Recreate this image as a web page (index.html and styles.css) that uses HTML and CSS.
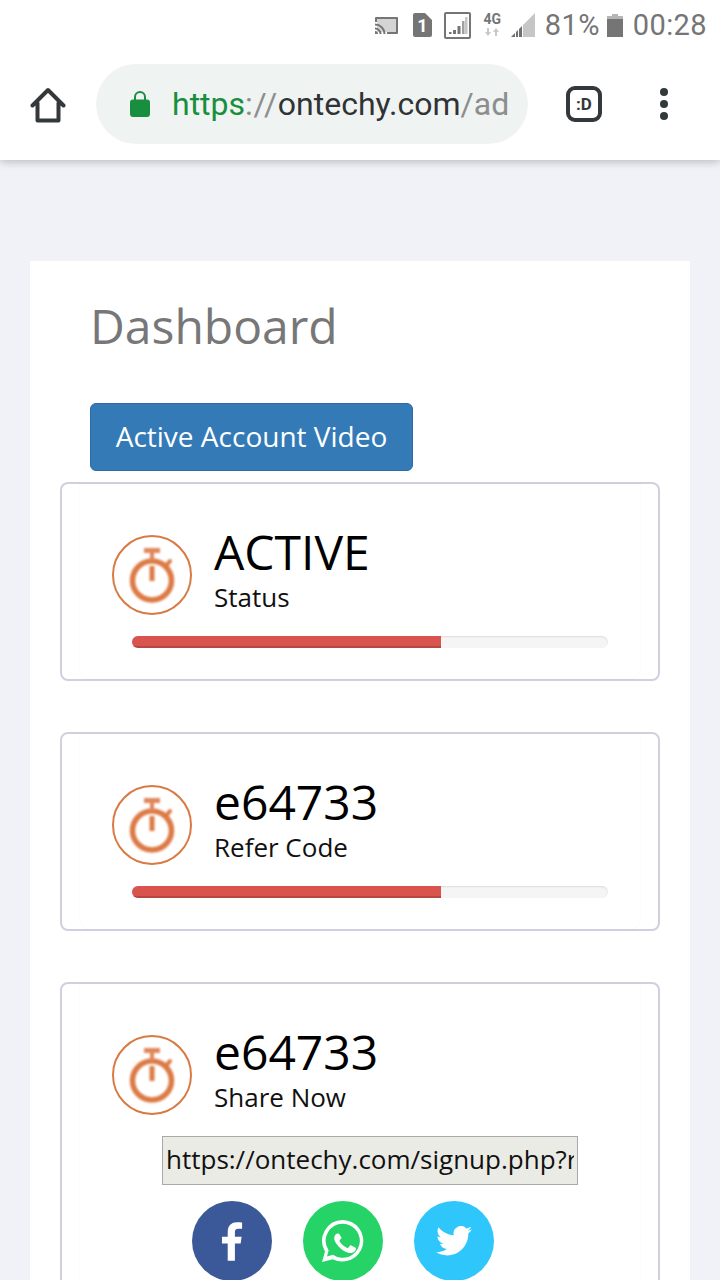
FILE: index.html
```html
<!DOCTYPE html>
<html lang="en">
<head>
    <meta charset="UTF-8">
    <meta name="viewport" content="width=device-width, initial-scale=1.0">
    <title>Dashboard</title>
    <link rel="stylesheet" href="styles.css">
</head>
<body>
<svg class="defs" width="0" height="0">
    <symbol id="watch" viewBox="0 0 80 80">
        <circle cx="40" cy="40" r="39" fill="none" stroke="#d97a42" stroke-width="2"/>
        <g class="watch-face">
            <circle cx="40" cy="45.500" r="19.500" fill="none" stroke="#dc7a45" stroke-width="5.500"/>
            <path d="M32 13h16v5H32z" fill="#e0875a"/>
            <path d="M40 18v8" stroke="#e0875a" stroke-width="4"/>
            <path d="M40 31v15" stroke="#dc7a45" stroke-width="5"/>
            <path d="M54 31l4-5" stroke="#dc7a45" stroke-width="4" stroke-linecap="round"/>
        </g>
    </symbol>
</svg>

<!-- Phone status bar -->
<div class="status-bar">
    <svg class="ico-cast" width="23" height="17" viewBox="0 0 23 17">
        <rect x="2" y="1.500" width="19.500" height="13.500" fill="#d4d4d4"/>
        <path d="M1 0h21a1 1 0 0 1 1 1v15a1 1 0 0 1-1 1H12v-2h9V2H2v3H0V1a1 1 0 0 1 1-1z" fill="#757575"/>
        <path d="M0 6.500A10.500 10.500 0 0 1 10.500 17H8.500A8.500 8.500 0 0 0 0 8.500zM0 10.500A6.500 6.500 0 0 1 6.500 17H4.500A4.500 4.500 0 0 0 0 12.500zM0 14a3 3 0 0 1 3 3H0z" fill="#757575"/>
    </svg>
    <svg class="ico-sim" width="19" height="24" viewBox="0 0 19 24">
        <path d="M2 0h10l7 7v15a2 2 0 0 1-2 2H2a2 2 0 0 1-2-2V2a2 2 0 0 1 2-2z" fill="#757575"/>
        <text x="9.500" y="19" text-anchor="middle" class="sim-num">1</text>
    </svg>
    <svg class="ico-box" width="27" height="27" viewBox="0 0 27 27">
        <rect x="1" y="1" width="25" height="25" rx="1" fill="none" stroke="#757575" stroke-width="2"/>
        <path d="M5 20h2.500v2H5zM9 18h3v4H9zM13.500 14h3v8h-3z" fill="#757575"/>
        <path d="M18 9h2.500v13H18z" fill="#a0a0a0"/>
        <path d="M21 5h2.500v17H21z" fill="#c4c4c4"/>
    </svg>
    <div class="net">
        <span class="net-label">4G</span>
        <svg width="14" height="8" viewBox="0 0 14 8">
            <path d="M3 8L0 4h2V0h2v4h2zM11 0l3 4h-2v4h-2V4H8z" fill="#c8c8c8"/>
        </svg>
    </div>
    <svg class="ico-signal" width="24" height="24" viewBox="0 0 24 24">
        <path d="M24 0v24H12V12z" fill="#c6c6c6"/>
        <path d="M0 24l4-4v4zM5 19l2-2v7H5zM8 16l3-3v11H8z" fill="#6e6e6e"/>
    </svg>
    <span class="battery-pct">81%</span>
    <svg class="ico-battery" width="16" height="23" viewBox="0 0 16 23">
        <path d="M5 0h6v2h5v21H0V2h5z" fill="#757575"/>
        <path d="M5 0h6v2h5v3H0V2h5z" fill="#b5b5b5"/>
    </svg>
    <span class="clock">00:28</span>
</div>

<!-- Browser toolbar -->
<div class="toolbar">
    <svg class="ico-home" width="36" height="36" viewBox="0 0 36 36">
        <path d="M2.500 18.500L18 3l15.500 15.500M7.500 16v17.500h21V16" fill="none" stroke="#33383b" stroke-width="4" stroke-linejoin="round" stroke-linecap="round"/>
    </svg>
    <div class="url-pill">
        <svg class="ico-lock" width="20" height="26" viewBox="0 0 20 26">
            <path d="M5 9V6a5 5 0 0 1 10 0v3" fill="none" stroke="#188e3e" stroke-width="2"/>
            <rect y="8.500" width="20" height="17.500" rx="3" fill="#188e3e"/>
        </svg>
        <div class="url"><span class="url-scheme">https</span><span class="url-sep">://</span>ontechy.com<span class="url-dim">/ad</span></div>
    </div>
    <div class="tab-btn">:D</div>
    <div class="menu-dots"><i></i><i></i><i></i></div>
</div>

<div class="page">
    <div class="panel">
        <h1 class="title">Dashboard</h1>
        <button class="btn-video">Active Account Video</button>

        <div class="card">
            <div class="card-inner">
                <div class="stat">
                    <svg class="watch" width="80" height="80"><use href="#watch"/></svg>
                    <div>
                        <div class="stat-value">ACTIVE</div>
                        <div class="stat-label">Status</div>
                    </div>
                </div>
                <div class="progress"><div class="progress-bar" style="width: 65%"></div></div>
            </div>
        </div>

        <div class="card">
            <div class="card-inner">
                <div class="stat">
                    <svg class="watch" width="80" height="80"><use href="#watch"/></svg>
                    <div>
                        <div class="stat-value">e64733</div>
                        <div class="stat-label">Refer Code</div>
                    </div>
                </div>
                <div class="progress"><div class="progress-bar" style="width: 65%"></div></div>
            </div>
        </div>

        <div class="card">
            <div class="card-inner">
                <div class="stat">
                    <svg class="watch" width="80" height="80"><use href="#watch"/></svg>
                    <div>
                        <div class="stat-value">e64733</div>
                        <div class="stat-label">Share Now</div>
                    </div>
                </div>
                <input class="share-link" type="text" value="https://ontechy.com/signup.php?ref=e64733" readonly>
                <div class="social">
                    <div class="social-btn fb">
                        <svg width="23" height="39" viewBox="0 0 24 40">
                            <path d="M7 40V22H1v-7h6V10C7 3.500 11 0 16.500 0c2.500 0 4.800.2 5.500.3v6.500h-3.800c-3 0-3.700 1.500-3.700 3.600V15h7l-1 7h-6v18z" fill="#fff"/>
                        </svg>
                    </div>
                    <div class="social-btn wa">
                        <svg width="48" height="48" viewBox="0 0 24 24">
                            <path d="M12 1.500A10.400 10.400 0 0 0 3 17.200L1.500 22.500l5.400-1.400A10.400 10.400 0 1 0 12 1.500zm0 1.900a8.500 8.500 0 1 1-4.600 15.700l-.4-.2-3 .8.800-3-.2-.4A8.500 8.500 0 0 1 12 3.400z" fill="#fff"/>
                            <path transform="translate(2.400 2.600) scale(.8)" d="M8.600 7c-.2 0-.6.100-.9.400-.3.400-1.200 1.100-1.200 2.700s1.200 3.200 1.400 3.400c.2.200 2.300 3.600 5.700 4.900 2.800 1.100 3.400.9 4 .8.600-.1 2-.8 2.200-1.600.3-.8.300-1.400.2-1.600-.1-.1-.3-.2-.7-.4l-2.200-1.100c-.3-.1-.5-.2-.8.200l-1 1.300c-.2.200-.4.300-.7.100-.4-.2-1.500-.6-2.800-1.800-1-.9-1.700-2-1.900-2.400-.2-.4 0-.5.200-.7l.9-1.100c.1-.2.100-.4 0-.6L9.900 7.700C9.600 7 9.300 7 9.100 7z" fill="#fff"/>
                        </svg>
                    </div>
                    <div class="social-btn tw">
                        <svg width="36" height="30" viewBox="0 0 24 20">
                            <path d="M24 2.400c-.9.400-1.800.7-2.800.8 1-.6 1.800-1.600 2.200-2.700-1 .6-2 1-3.100 1.200A4.900 4.900 0 0 0 11.900 6.200C7.800 6 4.200 4 1.700.9c-1.300 2.200-.7 5.100 1.500 6.600-.8 0-1.600-.2-2.200-.6 0 2.300 1.600 4.400 3.900 4.900-.7.200-1.500.2-2.200.1.600 2 2.500 3.400 4.600 3.400A9.900 9.900 0 0 1 0 17.400 14 14 0 0 0 7.500 19.600c9.100 0 14.300-7.700 14-14.600 1-.7 1.800-1.600 2.500-2.600z" fill="#fff"/>
                        </svg>
                    </div>
                </div>
            </div>
        </div>
    </div>
</div>
</body>
</html>
```

FILE: styles.css
```css
html, body {
    height: 1280px;
    overflow: hidden;
}
body {
    font-family: "Open Sans", sans-serif;
    background-color: #f0f2f7;
    margin: 0;
}
.defs {
    display: block;
}

.status-bar {
    height: 50px;
    background-color: #ffffff;
    display: flex;
    align-items: center;
    justify-content: flex-end;
    padding-right: 13px;
    font-family: Roboto, sans-serif;
    color: #757575;
    position: relative;
    z-index: 1;
}
.ico-cast {
    margin: 0 15px 0 0;
}
.ico-sim {
    margin-right: 12px;
}
.ico-box {
    margin-right: 12px;
}
.sim-num {
    font-family: Roboto, sans-serif;
    font-size: 18px;
    font-weight: 700;
    fill: #ffffff;
}
.net {
    width: 19px;
    margin-right: 9px;
    display: flex;
    flex-direction: column;
    align-items: center;
    gap: 3px;
}
.net-label {
    font-size: 14px;
    line-height: 11px;
    font-weight: 700;
}
.ico-signal {
    margin-right: 10px;
}
.battery-pct, .clock {
    font-size: 29px;
    letter-spacing: .4px;
}
.battery-pct {
    margin-right: 7px;
}
.ico-battery {
    margin-right: 10px;
}

.toolbar {
    height: 110px;
    background-color: #ffffff;
    box-shadow: 0 2px 8px rgba(60, 64, 80, 0.3);
    display: flex;
    align-items: center;
    position: relative;
}
.ico-home {
    margin-left: 30px;
}
.url-pill {
    width: 432px;
    height: 80px;
    margin: -2px 0 0 30px;
    box-sizing: border-box;
    padding: 0 16px 0 34px;
    border-radius: 40px;
    background-color: #eff3f1;
    display: flex;
    align-items: center;
    gap: 22px;
}
.ico-lock {
    flex: none;
}
.url {
    font-family: Roboto, sans-serif;
    font-size: 32px;
    color: #303336;
    white-space: nowrap;
    overflow: hidden;
}
.url-scheme {
    color: #188e3e;
}
.url-sep {
    color: #8d8d8d;
    letter-spacing: .7px;
}
.url-dim {
    color: #8d8d8d;
}
.tab-btn {
    width: 36px;
    height: 36px;
    box-sizing: border-box;
    margin-left: 38px;
    margin-top: -2px;
    border: 4px solid #33383b;
    border-radius: 9px;
    font-family: Roboto, sans-serif;
    font-size: 17px;
    font-weight: 700;
    color: #33383b;
    display: flex;
    align-items: center;
    justify-content: center;
}
.menu-dots {
    margin-left: 58px;
    margin-top: -2px;
    display: flex;
    flex-direction: column;
    gap: 4px;
}
.menu-dots i {
    width: 8px;
    height: 8px;
    border-radius: 50%;
    background-color: #33383b;
}

.page {
    padding: 101px 30px 0;
}
.panel {
    background-color: #ffffff;
    padding: 0 30px;
    height: 1100px;
}
.title {
    margin: 0;
    padding: 32px 0 0 30px;
    font-size: 48px;
    line-height: 65px;
    font-weight: 400;
    color: #777777;
}
.btn-video {
    display: block;
    margin: 45px 0 11px 30px;
    width: 323px;
    height: 68px;
    font-family: inherit;
    font-size: 28px;
    line-height: 64px;
    padding: 0 0 2px;
    color: #ffffff;
    background-color: #337ab7;
    border: 1px solid #2e6da4;
    border-radius: 6px;
}

.card {
    background-color: #ffffff;
    border: 2px solid #cfd0e0;
    border-radius: 8px;
    margin-bottom: 51px;
}
.card-inner {
    margin: 0 18px;
    padding: 51px 32px 31px;
    border-radius: 0 0 10px 10px;
    box-shadow: 0 0 2px rgba(80, 80, 120, 0.07);
}
.stat {
    display: flex;
    align-items: flex-start;
    gap: 23px;
}
.watch {
    flex: none;
}
.watch-face {
    filter: blur(.8px);
}
.stat-value {
    font-size: 48px;
    line-height: 50px;
    color: #000000;
    margin: -8px 0 0 -1px;
}
.stat-label {
    font-size: 26px;
    line-height: 36px;
    margin: 2px 0 0 -1px;
    color: #111111;
}
.progress {
    height: 12px;
    margin: 21px 0 0 20px;
    border-radius: 6px;
    overflow: hidden;
    background-color: #f5f5f5;
    box-shadow: inset 0 1px 2px rgba(0, 0, 0, 0.1);
    width: 476px;
}
.progress-bar {
    height: 100%;
    background-color: #d9534f;
    box-shadow: inset 0 -2px 0 rgba(0, 0, 0, 0.15);
}
.share-link {
    display: block;
    box-sizing: border-box;
    width: 416px;
    height: 49px;
    margin: 21px 0 0 50px;
    padding: 0 3px 3px;
    font-family: inherit;
    font-size: 26px;
    color: #111111;
    background-color: #eaebe4;
    border: 1px solid #a9a9a9;
    border-radius: 0;
    outline: none;
}
.social {
    display: flex;
    gap: 31px;
    margin: 16px 0 0 80px;
}
.social-btn {
    width: 80px;
    height: 80px;
    border-radius: 50%;
    display: flex;
    align-items: center;
    justify-content: center;
}
.fb {
    background-color: #3b5998;
}
.wa {
    background-color: #25d366;
}
.tw {
    background-color: #2fc6fc;
}
```
